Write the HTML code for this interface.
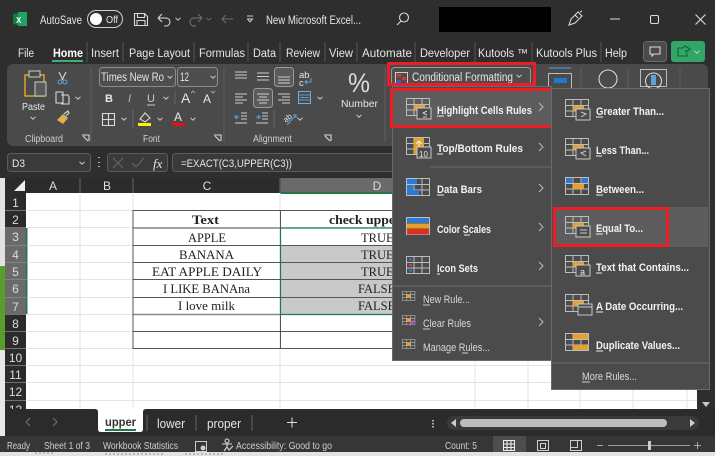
<!DOCTYPE html>
<html><head><meta charset="utf-8"><title>Excel</title>
<style>
html,body{margin:0;padding:0;background:#2e2e2e}
svg{display:block;width:715px;height:456px;overflow:hidden}
text{font-family:"Liberation Sans",sans-serif;font-size:11.5px;fill:#e6e6e6}
.m{font-weight:bold;font-size:11px;fill:#f2f2f2}
.n{font-size:11px;fill:#d8d8d8}
.s{font-family:"Liberation Serif",serif;font-size:12.5px;fill:#222}
.h{font-size:12px;fill:#dcdcdc;text-anchor:middle}
.st{font-size:10.5px;fill:#cfcfcf}
.i{fill:none;stroke:#d9d9d9;stroke-width:1.1}
.c{fill:none;stroke:#cfcfcf;stroke-width:1}
.b{stroke:#555;stroke-width:1}
</style></head><body>
<svg xmlns="http://www.w3.org/2000/svg" width="715" height="456" viewBox="0 0 715 456">
<defs>
<g id="chev"><path d="M-2.5-1.2 0 1.2 2.5-1.2" fill="none" stroke="#d0d0d0" stroke-width="1"/></g>
<g id="r"><path d="M-2-4 2 0-2 4" fill="none" stroke="#bbb" stroke-width="1"/></g>
<g id="tb"><path d="M.5.5h23v17H.5zM.5 6.5h23M.5 12h23M8 .5v17M16 .5v17" fill="none" stroke="#bdbdbd" stroke-width="1"/></g>
<g id="ov"><rect width="14" height="11" fill="#4b4b4b" stroke="#c8c8c8"/></g>
</defs>

<rect width="715" height="456" fill="#2e2e2e"/>
<!-- left strip -->
<rect x="0" y="178" width="5" height="88" fill="#e2e2e2"/>
<rect x="0" y="266" width="5" height="84" fill="#5a9e2a"/>
<rect x="0" y="350" width="5" height="86" fill="#e8e8e8"/>

<!-- title bar -->
<path d="M13 14l9-2h5v14h-5l-9-2z" fill="#107c41"/><rect x="18" y="12" width="9" height="14" fill="#21a366"/>
<text x="16" y="23" style="font-size:8px;font-weight:bold;fill:#fff">X</text>
<text x="40" y="24" textLength="42" lengthAdjust="spacingAndGlyphs">AutoSave</text>
<rect x="87.5" y="10.5" width="35" height="17" rx="8.5" fill="none" stroke="#d0d0d0"/>
<circle cx="96" cy="19" r="6" fill="#fff"/><text x="106" y="23" textLength="12" lengthAdjust="spacingAndGlyphs" style="font-size:10px">Off</text>
<path class="i" d="M134.5 13.5h10l3 3v9h-13zM137.500 13.500v4h7v-4M137 25.500v-5h8v5"/>
<path class="i" d="M158 18h8a4 4 0 0 1 0 8h-2M158 18l4-4M158 18l4 4"/>
<use href="#chev" x="178" y="19"/>
<path d="M202 18h-8a4 4 0 0 0 0 8h2M202 18l-4-4M202 18l-4 4" fill="none" stroke="#6a6a6a" stroke-width="1.2"/>
<path d="M206.500 18l2.500 2 2.500-2" fill="none" stroke="#666"/>
<path d="M233 19h-11M226 15l-4 4 4 4" fill="none" stroke="#6a6a6a" stroke-width="1.1"/>
<path d="M247 16h6" stroke="#ccc"/><path d="M247.500 19l2.500 3 2.500-3z" fill="none" stroke="#ccc"/>
<text x="266" y="24" textLength="95" lengthAdjust="spacingAndGlyphs">New Microsoft Excel...</text>
<circle cx="404" cy="17.500" r="4.500" class="i"/><path class="i" d="M401 21l-4 4"/>
<rect x="439" y="7" width="112" height="25" fill="#000"/>
<path class="i" d="M569 25l2-6 7-7 4 4-7 7zM575 15l3 3M580 12l2-1"/>
<path d="M610 19h10" stroke="#ddd"/><rect x="650.500" y="15.500" width="8" height="8" rx="1.500" class="i"/>
<path d="M695.500 14.500l10 10M705.500 14.500l-10 10" stroke="#ddd" stroke-width="1.100"/>

<!-- tabs -->
<text x="18" y="57" textLength="16" lengthAdjust="spacingAndGlyphs">File</text>
<text x="53" y="57" textLength="30" lengthAdjust="spacingAndGlyphs" style="font-weight:bold;fill:#fff">Home</text>
<rect x="52" y="60" width="31" height="2" fill="#3fae78"/>
<text x="91" y="57" textLength="28" lengthAdjust="spacingAndGlyphs">Insert</text>
<text x="129" y="57" textLength="61" lengthAdjust="spacingAndGlyphs">Page Layout</text>
<text x="199" y="57" textLength="46" lengthAdjust="spacingAndGlyphs">Formulas</text>
<text x="253" y="57" textLength="23" lengthAdjust="spacingAndGlyphs">Data</text>
<text x="286" y="57" textLength="34" lengthAdjust="spacingAndGlyphs">Review</text>
<text x="329" y="57" textLength="24" lengthAdjust="spacingAndGlyphs">View</text>
<text x="362" y="57" textLength="50" lengthAdjust="spacingAndGlyphs">Automate</text>
<text x="420" y="57" textLength="50" lengthAdjust="spacingAndGlyphs">Developer</text>
<text x="478" y="57" textLength="50" lengthAdjust="spacingAndGlyphs">Kutools ™</text>
<text x="536" y="57" textLength="61" lengthAdjust="spacingAndGlyphs">Kutools Plus</text>
<text x="605" y="57" textLength="22" lengthAdjust="spacingAndGlyphs">Help</text>
<path d="M87 42v20M123 42v20M194 42v20M248 42v20M280 42v20M325 42v20M357 42v20M415 42v20M475 42v20M532 42v20M601 42v20" stroke="#555"/>
<rect x="643.500" y="41.500" width="23" height="20" rx="3" fill="#4a4a4a" stroke="#6a6a6a"/>
<path class="i" d="M650 47h10v7h-6l-2 2v-2h-2z"/>
<rect x="671" y="41" width="34" height="21" rx="3" fill="#33a566"/>
<path d="M678 48h5l2-2 5 3-4 3v-2M678 48v8h9v-3" fill="none" stroke="#163" stroke-width="1.100"/>
<use href="#chev" x="697" y="52"/>

<!-- ribbon -->
<rect x="7" y="64" width="701" height="82" rx="6" fill="#4a4a4a"/>
<path d="M91 68v74M224 68v74M385 68v74M581 68v20M628 68v20M680 68v20" stroke="#5f5f5f"/>
<!-- clipboard -->
<path d="M25 75h19v21H25z" fill="none" stroke="#e0a030" stroke-width="1.500"/><rect x="29" y="71" width="11" height="6" fill="#4a4a4a" stroke="#ccc"/>
<rect x="35" y="82" width="11" height="14" fill="#5a5a5a" stroke="#ccc"/>
<text x="22" y="110" textLength="23" lengthAdjust="spacingAndGlyphs" style="font-size:10.5px">Paste</text>
<use href="#chev" x="33" y="118"/>
<path class="i" d="M59 72l4 8M66 72l-4 8"/><circle cx="60" cy="82" r="2" fill="none" stroke="#5aa3e0"/><circle cx="65" cy="82" r="2" fill="none" stroke="#5aa3e0"/>
<path class="i" d="M56 92h7v11h-7zM61 95h7l1 2v7h-8"/><use href="#chev" x="78" y="98"/>
<path d="M57 120l6-6 5 4-5 6z" fill="#e0b050"/><path class="i" d="M64 114l4-3 1 2-3 3"/>
<text x="25" y="142" textLength="38" lengthAdjust="spacingAndGlyphs" class="st">Clipboard</text>
<path class="i" d="M89 141v-6h-7M83 136l5 5"/>
<!-- font -->
<rect x="99.500" y="67.500" width="76" height="19" rx="3" fill="#4e4e4e" stroke="#8c8c8c"/>
<rect x="177.500" y="67.500" width="40" height="19" rx="3" fill="#4e4e4e" stroke="#8c8c8c"/>
<text x="101" y="81" textLength="63" lengthAdjust="spacingAndGlyphs">Times New Ro</text><use href="#chev" x="170" y="77"/>
<text x="180" y="81" textLength="9" lengthAdjust="spacingAndGlyphs">12</text><use href="#chev" x="213" y="77"/>
<text x="105" y="102" style="font-weight:bold;font-size:11px">B</text>
<text x="128" y="102" style="font-style:italic;font-size:11px;fill:#bbb">I</text>
<text x="147" y="102" style="font-size:11px;fill:#ccc">U</text><path d="M147 105h8" stroke="#ccc"/><use href="#chev" x="166" y="98"/>
<path d="M175 91v13M133 110v18" stroke="#666"/>
<text x="181" y="103" style="font-size:14px">A</text><path d="M191 93l2-2 2 2" fill="none" stroke="#6ab0e8"/>
<text x="203" y="103" style="font-size:12px">A</text><path d="M211 91l2 2 2-2" fill="none" stroke="#6ab0e8"/>
<path class="i" d="M102.500 113.500h12v12h-12zM108.500 113.500v12M102.500 119.500h12"/><use href="#chev" x="124" y="119"/>
<path class="i" d="M140 119l5-6 5 5-5 4z"/><rect x="138" y="123" width="13" height="3" fill="#ffef00"/><use href="#chev" x="160" y="119"/>
<text x="174" y="121" style="font-size:12px">A</text><rect x="172" y="123" width="13" height="3" fill="#e81010"/><use href="#chev" x="193" y="119"/>
<text x="143" y="142" textLength="17" lengthAdjust="spacingAndGlyphs" class="st">Font</text>
<path class="i" d="M221 141v-6h-7M215 136l5 5"/>
<!-- alignment -->
<rect x="274.500" y="67.500" width="19" height="19" rx="3" fill="#5a5a5a" stroke="#9a9a9a"/>
<rect x="253.500" y="88.500" width="19" height="19" rx="3" fill="#5a5a5a" stroke="#9a9a9a"/>
<path class="c" d="M235 72h12M235 75h12M235 78h12M257 73h12M257 76.500h12M257 80h12M278 77h12M278 80h12M278 83h12"/>
<path class="c" d="M235 94h12M235 97h8M235 100h12M235 103h8M257 94h12M259 97h8M257 100h12M259 103h8M278 94h12M282 97h8M278 100h12M282 103h8"/>
<text x="299" y="78" style="font-size:9.500px">ab</text><text x="299" y="86" style="font-size:9.500px">c</text><path d="M311 78v4h-6M307 80l-2 2 2 2" fill="none" stroke="#5aa3e0"/>
<rect x="298.500" y="91.500" width="12" height="12" fill="none" stroke="#6ab0e8"/><path d="M300 97.500h9M298.500 95h12M298.500 100h12" stroke="#6ab0e8" stroke-width=".7"/>
<use href="#chev" x="320" y="98"/>
<path class="c" d="M241 113h6M241 116h6M241 119h6M235 123h12"/><path d="M239 117h-4M237 115l-2 2 2 2" fill="none" stroke="#5aa3e0"/>
<path class="c" d="M262 113h6M262 116h6M262 119h6M256 123h12"/><path d="M256 117h4M258 115l2 2-2 2" fill="none" stroke="#5aa3e0"/>
<path d="M274 110v18" stroke="#666"/>
<text x="283" y="121" style="font-size:8px" transform="rotate(-40 287 118)">ab</text><path d="M287 125l9-10M293 115h3v3" fill="none" stroke="#5aa3e0"/>
<use href="#chev" x="300" y="119"/>
<text x="253" y="142" textLength="39" lengthAdjust="spacingAndGlyphs" class="st">Alignment</text>
<path class="i" d="M331 141v-6h-7M325 136l5 5"/>
<!-- number -->
<text x="348" y="92" textLength="22" lengthAdjust="spacingAndGlyphs" style="font-size:27px;fill:#ddd">%</text>
<text x="341" y="107" textLength="37" lengthAdjust="spacingAndGlyphs" style="font-size:10.500px">Number</text>
<use href="#chev" x="359" y="116"/>
<!-- other ribbon icons -->
<path d="M549 68h22" stroke="#5aa3e0"/><rect x="548.500" y="73.500" width="23" height="15" fill="none" stroke="#bbb"/><rect x="554" y="78" width="13" height="5" fill="#1f78d1"/>
<circle cx="608" cy="79" r="9" class="i"/><rect x="640.500" y="69.500" width="26" height="17" fill="none" stroke="#bbb"/><circle cx="653.500" cy="81" r="8" class="i"/><rect x="651" y="75" width="5" height="10" fill="#5aa3e0"/>

<!-- formula bar -->
<rect x="7.500" y="153.500" width="83" height="18" rx="3" fill="#3a3a3a" stroke="#5c5c5c"/>
<text x="12" y="167" textLength="13" lengthAdjust="spacingAndGlyphs" style="font-size:11px">D3</text><use href="#chev" x="82" y="163"/>
<path d="M99 157v1M99 162v1M99 166v1" stroke="#ddd" stroke-width="1.500"/>
<rect x="107.500" y="153.500" width="60" height="18" rx="3" fill="#3a3a3a" stroke="#5c5c5c"/>
<path d="M113 158l10 10M123 158l-10 10M132 163l4 4 8-9" fill="none" stroke="#6a6a6a"/>
<text x="153" y="168" style="font-family:'Liberation Serif',serif;font-style:italic;font-size:13px">fx</text>
<rect x="172.500" y="153.500" width="536" height="18" rx="3" fill="#3a3a3a" stroke="#5c5c5c"/>
<text x="181" y="167" textLength="111" lengthAdjust="spacingAndGlyphs" style="font-size:11px">=EXACT(C3,UPPER(C3))</text>

<!-- sheet -->
<rect x="5" y="178" width="692" height="231" fill="#fff"/>
<rect x="5" y="178" width="692" height="15" fill="#2b2b2b"/>
<rect x="280" y="178" width="195" height="15" fill="#6a6a6a"/>
<rect x="280" y="192" width="195" height="2" fill="#1f7a45"/>
<path d="M14 191l11-11v11z" fill="#eee"/>
<rect x="5" y="193" width="21" height="216" fill="#2b2b2b"/>
<rect x="5" y="228" width="21" height="86" fill="#6a6a6a"/>
<rect x="26" y="228" width="1.500" height="86" fill="#1f7a45"/>
<path d="M80 178v15M133 178v15M280 178v15" stroke="#555" stroke-width="1.500"/>
<path d="M5 210.500h21M5 227.500h21M5 245.500h21M5 262.500h21M5 279.500h21M5 297.500h21M5 314.500h21M5 331.500h21M5 348.500h21M5 365.500h21M5 382.500h21M5 400.500h21" stroke="#8a8a8a" stroke-width=".7"/>
<text x="53" y="190" class="h">A</text><text x="107" y="190" class="h">B</text><text x="207" y="190" class="h">C</text><text x="377" y="190" class="h">D</text>
<text x="15.500" y="207" class="h">1</text><text x="15.500" y="224" class="h">2</text><text x="15.500" y="241" class="h">3</text><text x="15.500" y="259" class="h">4</text><text x="15.500" y="276" class="h">5</text><text x="15.500" y="293" class="h">6</text><text x="15.500" y="311" class="h">7</text><text x="15.500" y="328" class="h">8</text><text x="15.500" y="345" class="h">9</text><text x="15.500" y="362" class="h">10</text><text x="15.500" y="379" class="h">11</text><text x="15.500" y="396" class="h">12</text><text x="15.500" y="414" class="h">13</text>
<path d="M27 210.500H697M27 227.500H697M27 245.500H697M27 262.500H697M27 279.500H697M27 297.500H697M27 314.500H697M27 331.500H697M27 348.500H697M27 365.500H697M27 382.500H697M27 400.500H697" stroke="#e4e4e4"/>
<path d="M80 193v216M133 193v216M280 193v216M475 193v216M528 193v216M580 193v216M633 193v216M687 193v216" stroke="#e4e4e4"/>
<rect x="281" y="246" width="194" height="68" fill="#c9c9c9"/>
<!-- table borders -->
<path d="M133 210.500H475M133 245.500H475M133 262.500H475M133 279.500H475M133 297.500H475M133 331.500H475M133 348.500H475" class="b"/>
<path d="M133 228h147M133 314.500h147" stroke="#888" stroke-width="1.500"/>
<path d="M133 210v139M280.500 210v139" class="b"/>
<path d="M280.500 228H475M280.500 314.500H475M280.500 228v87" stroke="#1f7a45" stroke-width="1.200" fill="none"/>
<text class="s" x="192" y="224" textLength="27" lengthAdjust="spacingAndGlyphs" style="font-weight:bold">Text</text>
<text class="s" x="329" y="224" textLength="72" lengthAdjust="spacingAndGlyphs" style="font-weight:bold">check upper</text>
<text class="s" x="188" y="242" textLength="38" lengthAdjust="spacingAndGlyphs">APPLE</text>
<text class="s" x="179" y="259" textLength="55" lengthAdjust="spacingAndGlyphs">BANANA</text>
<text class="s" x="152" y="276" textLength="110" lengthAdjust="spacingAndGlyphs">EAT APPLE DAILY</text>
<text class="s" x="163" y="293" textLength="87" lengthAdjust="spacingAndGlyphs">I LIKE BANAna</text>
<text class="s" x="178" y="310" textLength="57" lengthAdjust="spacingAndGlyphs">I love milk</text>
<text class="s" x="361" y="242">TRUE</text><text class="s" x="361" y="259">TRUE</text><text class="s" x="361" y="276">TRUE</text><text class="s" x="358" y="293">FALSE</text><text class="s" x="358" y="310">FALSE</text>

<!-- right scroll area -->
<rect x="697" y="146" width="18" height="263" fill="#2e2e2e"/>
<path d="M702 402h8l-4 5z" fill="#c8c8c8"/>

<!-- tab bar -->
<rect x="5" y="409" width="710" height="27" fill="#2b2b2b"/>
<path d="M30 418l-4 4 4 4M53 418l4 4-4 4" fill="none" stroke="#777"/>
<path d="M95 409q3 0 3 3v17q0 3 3 3h39q3 0 3-3v-17q0-3 3-3z" fill="#fff"/>
<text x="105" y="426" textLength="31" lengthAdjust="spacingAndGlyphs" style="font-weight:bold;font-size:12px;fill:#333">upper</text>
<rect x="105" y="429" width="31" height="2" fill="#1f7a45"/>
<text x="157" y="428" textLength="28" lengthAdjust="spacingAndGlyphs" style="font-size:12.500px">lower</text>
<text x="207" y="428" textLength="34" lengthAdjust="spacingAndGlyphs" style="font-size:12.500px">proper</text>
<path d="M147 415v16M196 415v16M252 415v16" stroke="#666"/>
<path d="M287 422.500h10M292 417.500v10" stroke="#ddd"/>
<path d="M433 420v1.500M433 423v1.500M433 426v1.500" stroke="#ddd" stroke-width="1.500"/>
<rect x="447" y="416" width="252" height="14" rx="7" fill="#3a3a3a"/>
<rect x="460" y="419" width="207" height="8" rx="4" fill="#bdbdbd"/>
<path d="M456 419v8l-5-4zM690 419v8l5-4z" fill="#ccc"/>

<!-- status bar -->
<rect x="0" y="436" width="715" height="16" fill="#363636"/>
<text x="7" y="449" textLength="23" lengthAdjust="spacingAndGlyphs" class="st">Ready</text>
<text x="44" y="449" textLength="46" lengthAdjust="spacingAndGlyphs" class="st">Sheet 1 of 3</text>
<text x="103" y="449" textLength="75" lengthAdjust="spacingAndGlyphs" class="st">Workbook Statistics</text>
<rect x="195.500" y="441.500" width="11" height="10" fill="none" stroke="#ccc"/><circle cx="203" cy="448" r="2.500" fill="#ccc"/>
<circle cx="227" cy="441" r="2" class="i"/><path class="i" d="M222 444h10M227 444v3l-3 4M227 447l2 3 4-4"/>
<text x="236" y="449" textLength="96" lengthAdjust="spacingAndGlyphs" class="st">Accessibility: Good to go</text>
<text x="445" y="449" textLength="32" lengthAdjust="spacingAndGlyphs" class="st">Count: 5</text>
<rect x="493" y="436" width="33" height="16" fill="#4d4d4d"/>
<path d="M503.500 440.500h11v10h-11zM503.500 444h11M503.500 447.500h11M507 440.500v10M511 440.500v10" fill="none" stroke="#eee"/>
<path class="c" d="M537.500 440.500h11v10h-11zM540.500 443.500h5v5h-5z"/>
<path class="c" d="M570.500 440.500h11v10h-11zM570.500 447.500h7v-7"/>
<path d="M597 445.500h6M694 445.500h7M697.500 442v7" stroke="#aaa"/>
<path d="M608 445.500h82" stroke="#999"/><rect x="648" y="441" width="3" height="9" fill="#ccc"/>
<!-- bottom strip -->
<rect x="0" y="452" width="715" height="4" fill="#e3e3e3"/>
<path d="M35 453h20M105 454h60M185 454h40" stroke="#777" stroke-width=".7" stroke-dasharray="2 2"/>

<!-- red box + cond format button -->
<rect x="391.500" y="67.500" width="139" height="18" rx="3" fill="#4e4e4e" stroke="#999"/>
<path class="c" d="M395.500 72.500h12v12h-12z"/><rect x="397" y="74" width="4" height="3" fill="#d33"/><rect x="397" y="80" width="4" height="3" fill="#26d"/><rect x="402" y="77" width="4" height="3" fill="#d33"/>
<text x="412" y="81" textLength="101" lengthAdjust="spacingAndGlyphs">Conditional Formatting</text><use href="#chev" x="519" y="76"/>
<rect x="388.500" y="63.500" width="146" height="21" fill="none" stroke="#ee1c25" stroke-width="3"/>

<!-- menu 1 -->
<rect x="392.500" y="86.500" width="159" height="274" fill="#4b4b4b" stroke="#6a6a6a"/>
<rect x="393" y="89" width="158" height="36" fill="#5d5d5d"/>
<path d="M430 167h121M393 286h158" stroke="#6c6c6c"/>

<g transform="translate(406,98)"><use href="#tb"/><rect x="8" y="7" width="11" height="5" fill="#e8a02c"/><use href="#ov" x="11" y="10"/><path d="M21 13l-4 2 4 2M17 19h4" fill="none" stroke="#ccc"/></g>
<g transform="translate(406,137)"><use href="#tb"/><rect x="8" y="1" width="10" height="16" fill="#e8a02c"/><path d="M13 14V4M10 7l3-3 3 3" fill="none" stroke="#eee"/><use href="#ov" x="11" y="10"/><text x="13" y="20" style="font-size:8px">10</text></g>
<g transform="translate(406,178)"><use href="#tb"/><rect x="1" y="1" width="10" height="5" fill="#2a7ad6"/><rect x="1" y="7" width="6" height="5" fill="#2a7ad6"/><rect x="1" y="12" width="12" height="5" fill="#2a7ad6"/></g>
<g transform="translate(406,217)"><rect x=".5" y=".5" width="23" height="17" fill="#4b4b4b" stroke="#bdbdbd"/><rect x="1" y="1" width="22" height="5" fill="#2a7ad6"/><rect x="1" y="6.500" width="22" height="5" fill="#e8a02c"/><rect x="1" y="12" width="22" height="5.500" fill="#d8331f"/></g>
<g transform="translate(406,256)"><use href="#tb"/><rect x="3" y="2.500" width="3" height="2" fill="#2a7ad6"/><rect x="3" y="8" width="3" height="2" fill="#e03a3a"/><rect x="3" y="13.500" width="3" height="2" fill="#2a7ad6"/></g>
<text class="m" x="437" y="114" textLength="95" lengthAdjust="spacingAndGlyphs">Highlight Cells Rules</text><path d="M437 116h7" stroke="#eee"/>
<text class="m" x="437" y="152" textLength="86" lengthAdjust="spacingAndGlyphs">Top/Bottom Rules</text><path d="M437 154h6" stroke="#eee"/>
<text class="m" x="437" y="193" textLength="45" lengthAdjust="spacingAndGlyphs">Data Bars</text><path d="M437 195h7" stroke="#eee"/>
<text class="m" x="437" y="233" textLength="54" lengthAdjust="spacingAndGlyphs">Color Scales</text><path d="M464 235h6" stroke="#eee"/>
<text class="m" x="437" y="272" textLength="41" lengthAdjust="spacingAndGlyphs">Icon Sets</text><path d="M437 274h3" stroke="#eee"/>
<use href="#r" x="541" y="107"/><use href="#r" x="541" y="147"/><use href="#r" x="541" y="188"/><use href="#r" x="541" y="227"/><use href="#r" x="541" y="266"/><use href="#r" x="541" y="322"/>
<g transform="translate(402,291) scale(.55)"><use href="#tb"/><rect x="8" y="6" width="8" height="6" fill="#e8a02c"/></g>
<g transform="translate(402,315) scale(.55)"><use href="#tb"/><rect x="8" y="6" width="8" height="6" fill="#e8a02c"/><path d="M12 17l8-8 3 3-8 8z" fill="#c050d0"/></g>
<g transform="translate(402,339) scale(.55)"><use href="#tb"/><rect x="8" y="6" width="8" height="6" fill="#e8a02c"/></g>
<text class="n" x="423" y="303" textLength="47" lengthAdjust="spacingAndGlyphs">New Rule...</text><path d="M423 305h7" stroke="#ccc"/>
<text class="n" x="423" y="327" textLength="48" lengthAdjust="spacingAndGlyphs">Clear Rules</text><path d="M423 329h7" stroke="#ccc"/>
<text class="n" x="423" y="351" textLength="67" lengthAdjust="spacingAndGlyphs">Manage Rules...</text><path d="M462 353h6" stroke="#ccc"/>
<rect x="391.500" y="89.500" width="163" height="37" fill="none" stroke="#ee1c25" stroke-width="3"/>

<!-- menu 2 -->
<rect x="551.500" y="88.500" width="158" height="301" fill="#4b4b4b" stroke="#6a6a6a"/>
<rect x="553" y="207" width="155" height="40" fill="#5d5d5d"/>
<path d="M552 363h157" stroke="#6c6c6c"/>
<g transform="translate(565,99)"><use href="#tb"/><rect x="8" y="7" width="11" height="5" fill="#e8a02c"/><use href="#ov" x="11" y="10"/><path d="M16 13l5 2-5 3" fill="none" stroke="#ccc"/></g>
<g transform="translate(565,138)"><use href="#tb"/><rect x="8" y="7" width="11" height="5" fill="#e8a02c"/><use href="#ov" x="11" y="10"/><path d="M21 13l-5 2 5 3" fill="none" stroke="#ccc"/></g>
<g transform="translate(565,177)"><use href="#tb"/><rect x="1" y="1" width="6" height="5" fill="#2a7ad6"/><rect x="17" y="1" width="6" height="5" fill="#2a7ad6"/><rect x="8" y="7" width="11" height="5" fill="#e8a02c"/></g>
<g transform="translate(565,216)"><use href="#tb"/><rect x="8" y="7" width="11" height="5" fill="#e8a02c"/><use href="#ov" x="11" y="10"/><path d="M15 14h7M15 17h7" stroke="#ccc"/></g>
<g transform="translate(565,255)"><use href="#tb"/><rect x="8" y="7" width="11" height="5" fill="#e8a02c"/><use href="#ov" x="11" y="10"/><text x="15" y="20" style="font-size:9px">a</text></g>
<g transform="translate(565,294)"><use href="#tb"/><rect x="8" y="7" width="11" height="5" fill="#e8a02c"/><use href="#ov" x="13" y="10"/><path d="M13 13h14" stroke="#ccc"/></g>
<g transform="translate(565,333)"><use href="#tb"/><rect x="8" y="1" width="15" height="5" fill="#e8a02c"/><rect x="8" y="12" width="15" height="5" fill="#e8a02c"/></g>
<text class="m" x="596" y="115" textLength="68" lengthAdjust="spacingAndGlyphs">Greater Than...</text><path d="M596 117h7" stroke="#eee"/>
<text class="m" x="596" y="154" textLength="53" lengthAdjust="spacingAndGlyphs">Less Than...</text><path d="M596 156h6" stroke="#eee"/>
<text class="m" x="596" y="193" textLength="48" lengthAdjust="spacingAndGlyphs">Between...</text><path d="M596 195h7" stroke="#eee"/>
<text class="m" x="596" y="232" textLength="47" lengthAdjust="spacingAndGlyphs">Equal To...</text><path d="M596 234h7" stroke="#eee"/>
<text class="m" x="596" y="271" textLength="93" lengthAdjust="spacingAndGlyphs">Text that Contains...</text><path d="M596 273h6" stroke="#eee"/>
<text class="m" x="596" y="310" textLength="87" lengthAdjust="spacingAndGlyphs">A Date Occurring...</text><path d="M596 312h7" stroke="#eee"/>
<text class="m" x="596" y="349" textLength="84" lengthAdjust="spacingAndGlyphs">Duplicate Values...</text><path d="M596 351h7" stroke="#eee"/>
<text class="n" x="582" y="380" textLength="55" lengthAdjust="spacingAndGlyphs">More Rules...</text><path d="M582 382h8" stroke="#ccc"/>
<rect x="554.500" y="208.500" width="113" height="37" fill="none" stroke="#ee1c25" stroke-width="3"/>
</svg>
</body></html>
